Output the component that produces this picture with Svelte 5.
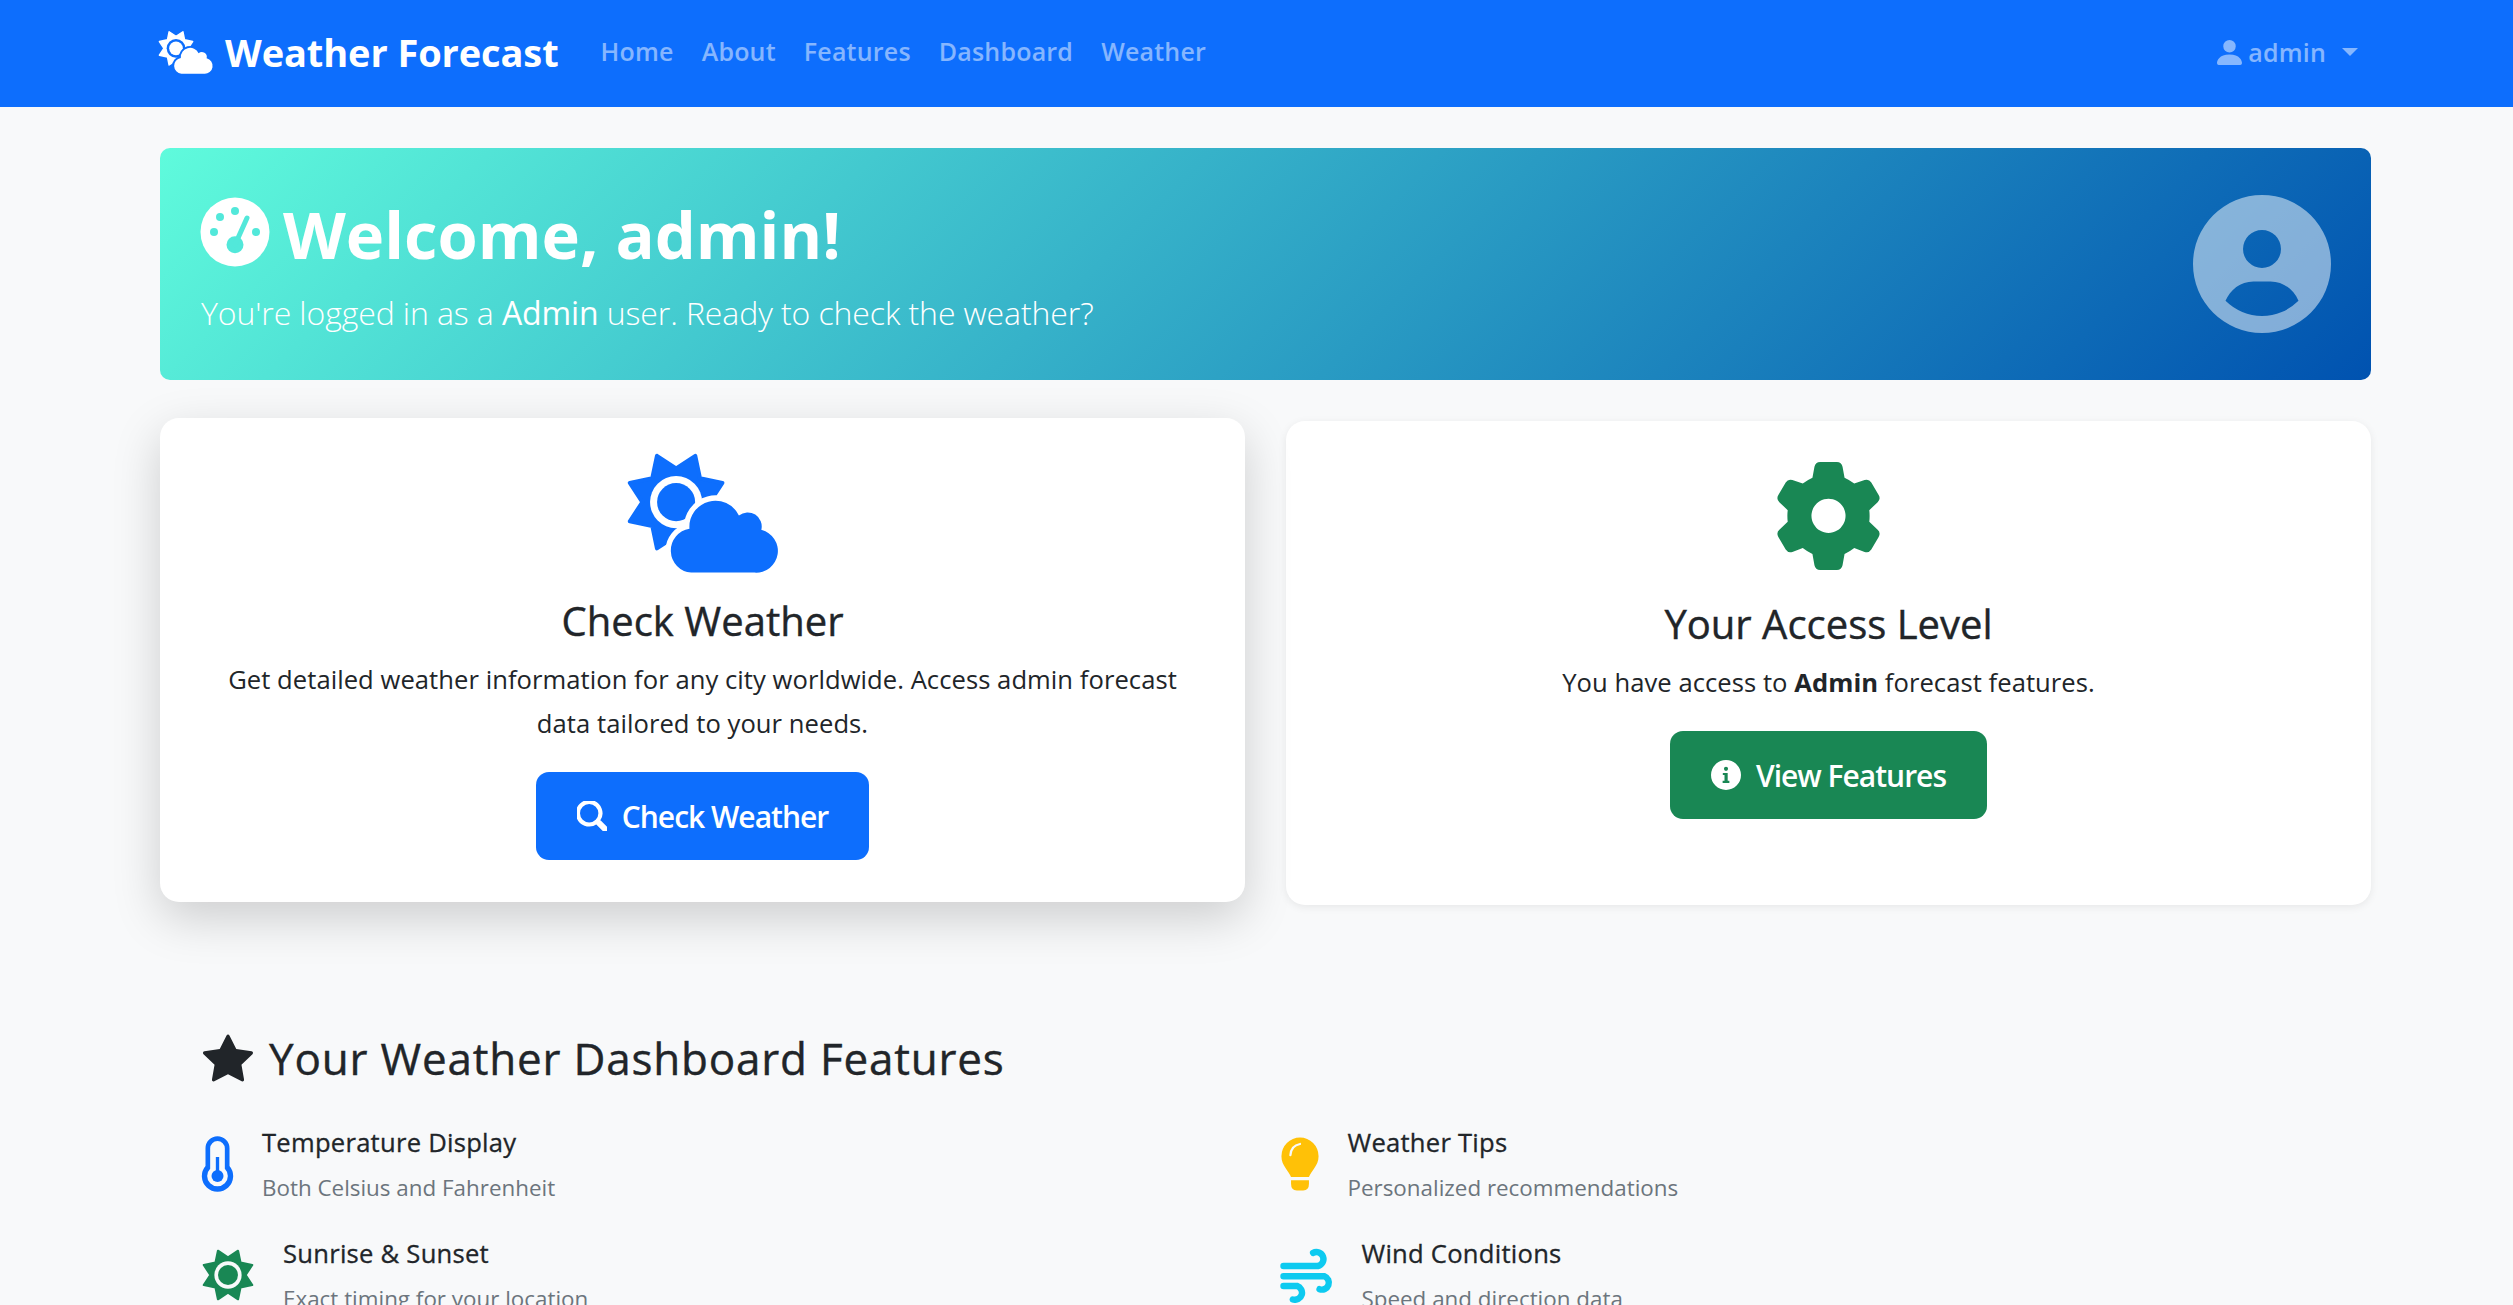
<script>
  const navLinks = ['Home', 'About', 'Features', 'Dashboard', 'Weather'];

  // spiky sun outline, 8 rays, centred on cx/cy
  function sunPoints(cx, cy, tip, valley) {
    const pts = [];
    for (let i = 0; i < 16; i++) {
      const r = i % 2 === 0 ? valley : tip;
      const a = (i * Math.PI) / 8 - Math.PI / 2;
      pts.push(`${(cx + r * Math.cos(a)).toFixed(1)},${(cy + r * Math.sin(a)).toFixed(1)}`);
    }
    return pts.join(' ');
  }

  const bigSun = sunPoints(530, 245, 150, 101);
  const smallSun = sunPoints(0, 0, 150, 101);
</script>

{#snippet cloudSun()}
  <svg class="cloud-sun" viewBox="380 92 458 372" aria-hidden="true">
    <polygon class="rays" points={bigSun} />
    <circle class="halo-fill" cx="530" cy="245" r="78" />
    <circle cx="530" cy="245" r="57" />
    <path class="cloud" d="M575 456A66 66 0 0 1 570 325A78 78 0 0 1 718 285A42 42 0 0 1 785 328A65 65 0 0 1 765 456Z" />
  </svg>
{/snippet}

<nav class="navbar">
  <a class="brand" href="#top">
    <span class="brand-icon">{@render cloudSun()}</span>
    Weather Forecast
  </a>
  <ul class="nav-links">
    {#each navLinks as link}
      <li><a href="#top">{link}</a></li>
    {/each}
  </ul>
  <a class="user" href="#top">
    <svg viewBox="2 2 12 12" aria-hidden="true"><path d="M3 14s-1 0-1-1 1-4 6-4 6 3 6 4-1 1-1 1H3Zm5-6a3 3 0 1 0 0-6 3 3 0 0 0 0 6Z" /></svg>
    <span>admin</span>
    <i class="caret"></i>
  </a>
</nav>

<main class="page">
  <section class="banner">
    <div class="banner-text">
      <h1>
        <svg class="gauge" viewBox="-35 -35 70 70" aria-hidden="true">
          <circle r="34.5" />
          <g class="cut">
            <circle cx="0" cy="-21" r="4" />
            <circle cx="-15" cy="-15" r="4" />
            <circle cx="-21" cy="0" r="4" />
            <circle cx="21" cy="0" r="4" />
            <circle cx="0" cy="12.7" r="8.5" />
            <path d="M0 12.7L12 -14" />
          </g>
        </svg>
        Welcome, admin!
      </h1>
      <p>You're logged in as a <strong>Admin</strong> user. Ready to check the weather?</p>
    </div>
    <svg class="avatar" viewBox="0 0 16 16" aria-hidden="true">
      <path fill-rule="evenodd" d="M16 8A8 8 0 1 1 0 8a8 8 0 0 1 16 0ZM10.2 6.25a2.2 2.2 0 1 0-4.4 0 2.2 2.2 0 0 0 4.4 0ZM3.77 12.27A6 6 0 0 0 12.23 12.27C11.7 11 10.5 10.02 9 10.02H7C5.5 10.02 4.3 11 3.77 12.27Z" />
    </svg>
  </section>

  <section class="cards">
    <article class="card raised">
      <div class="card-icon blue">{@render cloudSun()}</div>
      <h2>Check Weather</h2>
      <p>Get detailed weather information for any city worldwide. Access admin forecast data tailored to your needs.</p>
      <a class="btn primary" href="#top">
        <svg class="search" viewBox="0 0 16 16" aria-hidden="true"><path d="M11.742 10.344a6.5 6.5 0 1 0-1.397 1.398h-.001c.03.04.062.078.098.115l3.85 3.85a1 1 0 0 0 1.415-1.414l-3.85-3.85a1.007 1.007 0 0 0-.115-.1zM12 6.5a5.5 5.5 0 1 1-11 0 5.5 5.5 0 0 1 11 0z" /></svg>
        Check Weather
      </a>
    </article>
    <article class="card">
      <div class="card-icon">
        <svg class="gear" viewBox="525 90 320 335" aria-hidden="true">
          <path fill-rule="evenodd" d="M660 96H710Q724 96 727 110L733 143Q748 150 762 160L793 150Q806 146 813 157L835 195Q842 207 832 216L807 240Q809 257 807 275L832 299Q842 308 835 320L813 358Q806 369 793 365L762 353Q748 364 733 371L727 405Q724 419 710 419H660Q646 419 643 405L637 371Q622 364 608 353L577 365Q564 369 557 358L535 320Q528 308 538 299L563 275Q561 257 563 240L538 216Q528 207 535 195L557 157Q564 146 577 150L608 160Q622 150 637 143L643 110Q646 96 660 96ZM685 206a51 51 0 1 0 .01 0Z" />
        </svg>
      </div>
      <h2>Your Access Level</h2>
      <p>You have access to <strong>Admin</strong> forecast features.</p>
      <a class="btn success" href="#top">
        <svg viewBox="0 0 16 16" aria-hidden="true"><path fill-rule="evenodd" d="M16 8A8 8 0 1 1 0 8a8 8 0 0 1 16 0ZM8 3.6a1.1 1.1 0 1 0 0 2.2 1.1 1.1 0 0 0 0-2.2ZM6.3 6.9V8H7.2V11H6.2V12.2H9.8V11H8.9V6.9Z" /></svg>
        View Features
      </a>
    </article>
  </section>

  <section class="features">
    <h3>
      <svg viewBox="0 0 16 16" aria-hidden="true"><path d="M3.612 15.443c-.386.198-.824-.149-.746-.592l.83-4.73L.173 6.765c-.329-.314-.158-.888.283-.95l4.898-.696L7.538.792c.197-.39.73-.39.927 0l2.184 4.327 4.898.696c.441.062.612.636.282.95l-3.522 3.356.83 4.73c.078.443-.36.79-.746.592L8 13.187l-4.389 2.256z" /></svg>
      Your Weather Dashboard Features
    </h3>
    <div class="feature-grid">
      <div class="feature">
        <svg class="thermo" viewBox="95 415 98 168" aria-hidden="true">
          <path fill-rule="evenodd" d="M108 452a36 36 0 0 1 72 0V505A47 47 0 1 1 108 505ZM122 452V513A31 31 0 1 0 166 513V452a22 22 0 0 0-44 0Z" />
          <circle cx="144" cy="535" r="18" />
          <rect x="139" y="478" width="10" height="57" />
        </svg>
        <div>
          <h4>Temperature Display</h4>
          <small>Both Celsius and Fahrenheit</small>
        </div>
      </div>
      <div class="feature">
        <svg class="bulb" viewBox="85 112 130 175" aria-hidden="true">
          <path d="M150 117A58 58 0 0 1 208 175C208 205 185 220 178 240H122C115 220 92 205 92 175A58 58 0 0 1 150 117Z" />
          <path d="M122 250H178V262Q178 282 160 282H140Q122 282 122 262Z" />
          <path class="glint" d="M120 172Q122 142 150 137" />
        </svg>
        <div>
          <h4>Weather Tips</h4>
          <small>Personalized recommendations</small>
        </div>
      </div>
      <div class="feature">
        <svg class="sun" viewBox="-160 -160 320 320" aria-hidden="true">
          <polygon class="rays" points={smallSun} />
          <circle class="ring" r="78" />
          <circle r="57" />
        </svg>
        <div>
          <h4>Sunrise &amp; Sunset</h4>
          <small>Exact timing for your location</small>
        </div>
      </div>
      <div class="feature">
        <svg class="wind" viewBox="54 50 174 172" aria-hidden="true">
          <path d="M68 108H175A22 22 0 1 0 160 67" />
          <path d="M68 140H195A20 20 0 1 1 180 180" />
          <path d="M68 170H110A20 20 0 1 1 97 212" />
        </svg>
        <div>
          <h4>Wind Conditions</h4>
          <small>Speed and direction data</small>
        </div>
      </div>
    </div>
  </section>
</main>

<style>
  :global(html) {
    overflow: hidden;
  }

  :global(body) {
    background: #f8f9fa;
    color: #212529;
    font-family: "Open Sans", "Noto Sans", sans-serif;
    font-size: 25.6px;
    line-height: 1.7;
  }

  a {
    text-decoration: none;
  }

  svg {
    fill: currentColor;
    display: block;
    flex: none;
  }

  .navbar {
    height: 107px;
    background: #0d6efd;
    padding: 0 142px 3px 160px;
    display: flex;
    align-items: center;
    box-sizing: border-box;
  }

  .brand {
    display: flex;
    align-items: center;
    gap: 12px;
    color: #fff;
    font-size: 38px;
    font-weight: 700;
    letter-spacing: -0.1px;
    --halo: #0d6efd;
  }

  .brand-icon {
    width: 55px;
    margin-left: -2px;
    display: block;
  }

  .nav-links {
    list-style: none;
    margin: 0 0 0 42px;
    padding: 0;
    display: flex;
    gap: 28px;
  }

  .nav-links a,
  .user {
    color: rgba(255, 255, 255, 0.5);
    font-weight: 600;
    font-size: 25px;
    letter-spacing: 0.2px;
  }

  .user {
    margin-left: auto;
    margin-right: 13px;
    display: flex;
    align-items: center;
    gap: 6px;
  }

  .user svg {
    width: 25px;
    height: 25px;
  }

  .caret {
    margin-left: 10px;
    border-top: 8px solid currentColor;
    border-left: 8px solid transparent;
    border-right: 8px solid transparent;
  }

  .cloud-sun {
    width: 100%;
    height: auto;
    overflow: visible;
  }

  .halo-fill {
    fill: var(--halo, #fff);
  }

  .cloud {
    stroke: var(--halo, #fff);
    stroke-width: 32px;
    paint-order: stroke;
  }

  .rays {
    stroke: currentColor;
    stroke-width: 12px;
    stroke-linejoin: round;
  }

  .page {
    padding: 41px 142px 0 160px;
  }

  .banner {
    height: 232px;
    box-sizing: border-box;
    padding: 40px;
    border-radius: 10px;
    color: #fff;
    background: linear-gradient(135deg, #5ffbdc, #0052b0);
    display: flex;
    align-items: center;
    justify-content: space-between;
  }

  .banner-text {
    padding-top: 7px;
  }

  h1 {
    margin: 0 0 14px;
    display: flex;
    align-items: center;
    gap: 13px;
    font-size: 65px;
    font-weight: 700;
    line-height: 76px;
  }

  .gauge {
    width: 70px;
    height: 70px;
    margin-top: -4px;
  }

  .cut {
    fill: #52e8da;
    stroke: #52e8da;
  }

  .cut path {
    stroke-width: 5px;
    stroke-linecap: round;
  }

  .cut circle {
    stroke: none;
  }

  .banner p {
    margin: 0 0 0 1px;
    font-size: 32px;
    font-weight: 300;
    line-height: 54px;
    letter-spacing: -0.1px;
  }

  .banner strong {
    font-weight: 500;
  }

  .avatar {
    width: 138px;
    height: 138px;
    opacity: 0.5;
  }

  .cards {
    display: grid;
    grid-template-columns: 1fr 1fr;
    gap: 41px;
    margin-top: 41px;
  }

  .card {
    background: #fff;
    border-radius: 19px;
    padding: 39px 40px 42px;
    text-align: center;
    box-shadow: 0 2px 8px rgba(0, 0, 0, 0.075);
  }

  .raised {
    transform: translateY(-3px);
    box-shadow: 0 16px 48px rgba(0, 0, 0, 0.175);
  }

  .card-icon {
    height: 112px;
    display: flex;
    align-items: center;
    justify-content: center;
    color: #198754;
  }

  .card-icon.blue {
    color: #0d6efd;
  }

  .card-icon .cloud-sun {
    width: 153px;
  }

  .gear {
    width: 107px;
    height: 112px;
  }

  h2 {
    margin: 28px 0 13px;
    font-size: 40px;
    font-weight: 500;
    line-height: 48px;
    -webkit-text-stroke: 0.4px currentColor;
  }

  .card p {
    margin: 0 auto 26px;
    max-width: 990px;
    line-height: 44px;
    letter-spacing: 0.05px;
  }

  .card p strong {
    font-weight: 700;
  }

  .btn {
    display: inline-flex;
    align-items: center;
    gap: 15px;
    height: 88px;
    padding: 0 41px;
    box-sizing: border-box;
    border-radius: 13px;
    color: #fff;
    font-size: 30px;
    font-weight: 600;
    letter-spacing: -1px;
  }

  .btn svg {
    width: 30px;
    height: 30px;
  }

  .btn .search {
    stroke: currentColor;
    stroke-width: 1.2px;
  }

  .primary {
    background: #0d6efd;
  }

  .success {
    background: #198754;
  }

  .features {
    margin-top: 126px;
    padding: 0 40px;
  }

  h3 {
    margin: 0 0 36px;
    display: flex;
    align-items: center;
    gap: 16px;
    font-size: 44px;
    font-weight: 500;
    line-height: 54px;
    letter-spacing: 0.8px;
    -webkit-text-stroke: 0.4px currentColor;
  }

  h3 svg {
    width: 50px;
    height: 50px;
    margin-left: 3px;
  }

  .feature-grid {
    display: grid;
    grid-template-columns: 1fr 1fr;
    column-gap: 26px;
    row-gap: 25px;
  }

  .feature {
    display: flex;
    align-items: center;
    gap: 27px;
    height: 86px;
  }

  h4 {
    margin: 0 0 4px;
    font-size: 25.6px;
    font-weight: 500;
    line-height: 44px;
    letter-spacing: 0.25px;
    -webkit-text-stroke: 0.3px currentColor;
  }

  small {
    display: block;
    color: #6c757d;
    font-size: 22.4px;
    line-height: 38px;
  }

  .thermo {
    width: 35px;
    height: 56px;
    color: #0d6efd;
  }

  .bulb {
    width: 42px;
    height: 56px;
    color: #ffc107;
  }

  .glint {
    fill: none;
    stroke: #f8f9fa;
    stroke-width: 7px;
    stroke-linecap: round;
  }

  .sun {
    width: 56px;
    height: 56px;
    color: #198754;
  }

  .ring {
    fill: #f8f9fa;
  }

  .wind {
    width: 56px;
    height: 56px;
    fill: none;
    stroke: #0dcaf0;
    stroke-width: 20px;
    stroke-linecap: round;
  }
</style>
